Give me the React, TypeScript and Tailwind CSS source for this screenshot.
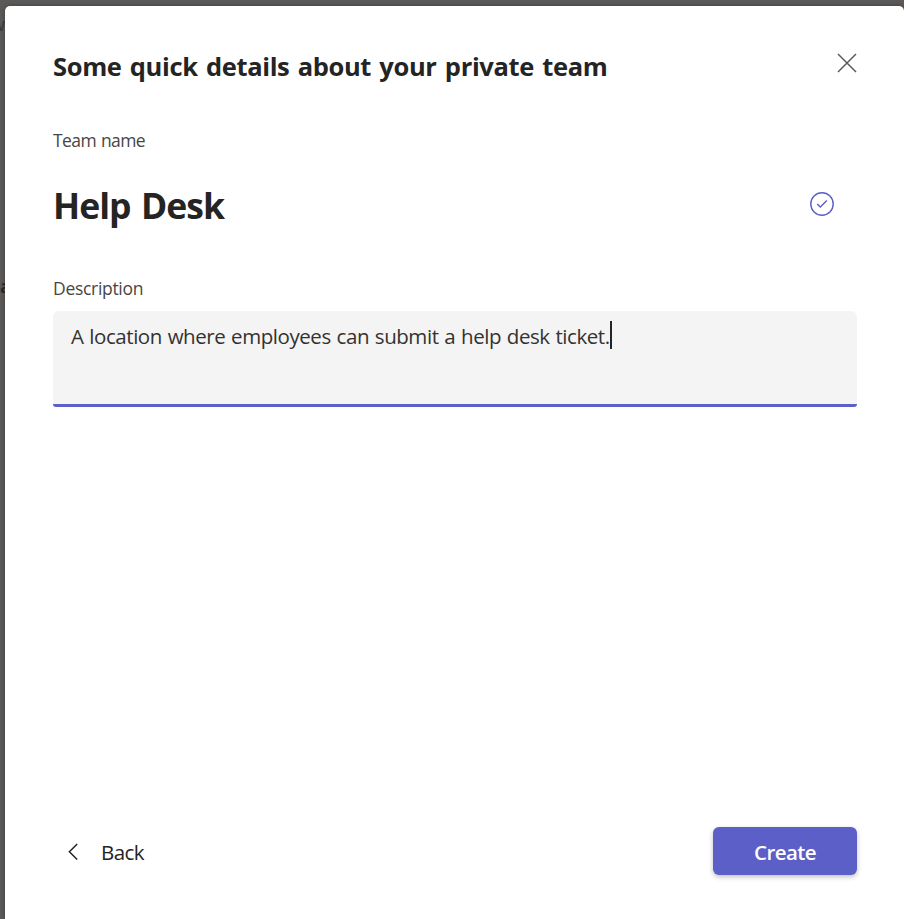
function CloseIcon() {
  return (
    <svg width="20" height="20" viewBox="0 0 20 20" fill="none" stroke="#5c5a58" strokeWidth="1.5">
      <path d="M1 1l18 18M19 1L1 19" />
    </svg>
  );
}

function CheckCircleIcon() {
  return (
    <svg width="24" height="24" viewBox="0 0 24 24" fill="none" stroke="#5b5fc7" strokeWidth="1.4">
      <circle cx="12" cy="12" r="11.2" />
      <path d="M7.2 12l3.1 3.1 6.5-6.5" />
    </svg>
  );
}

function ChevronLeftIcon() {
  return (
    <svg width="10" height="17" viewBox="0 0 10 17" fill="none" stroke="#242424" strokeWidth="1.5">
      <path d="M9.2 1L1.4 8.8l7.8 7.7" />
    </svg>
  );
}

export default function App() {
  return (
    <div className="relative h-[919px] w-[904px] overflow-hidden bg-[#5b5a58] pl-[5px] pt-[6px] font-['Open_Sans','Noto_Sans',sans-serif] text-[#242424]">
      <span className="absolute left-[-9px] top-[12px] text-[18px] leading-[24px] text-[#3b3a39]">w</span>
      <span className="absolute left-0 top-[274px] text-[18px] font-bold leading-[24px] text-[#2b2a29]">a</span>
      <main className="relative flex h-[913px] w-[899px] flex-col rounded-t-[5px] bg-white pl-[48px] pr-[47px] shadow-[0_0_4px_rgba(0,0,0,0.35)]">
        <header className="flex items-start justify-between pt-[42px]">
          <h1 className="h-[36px] whitespace-nowrap text-[25.5px] font-bold leading-[37px] tracking-[-0.35px] [word-spacing:2px]">
            Some quick details about your private team
          </h1>
          <button aria-label="Close" className="mt-[5px]">
            <CloseIcon />
          </button>
        </header>

        <label className="mt-[44px] h-[24px] text-[17.5px] leading-[24px] tracking-[-0.6px] text-[#484644] [word-spacing:1px]">Team name</label>
        <div className="mt-[27px] flex h-[50px] items-center justify-between pr-[23px]">
          <span className="pt-[2px] text-[35.5px] font-bold leading-[50px] tracking-[-0.95px] [word-spacing:2px]">Help Desk</span>
          <CheckCircleIcon />
        </div>

        <label className="mt-[47px] h-[24px] text-[17.5px] leading-[24px] tracking-[-0.3px] text-[#484644]">Description</label>
        <div className="mt-[11px] flex h-[96px] items-start rounded-b-[3px] rounded-t-[6px] bg-linear-to-t from-[#5b5fc7] from-[3px] to-[#f4f4f4] to-[3px] pl-[18px] pt-[10px]">
          <span className="whitespace-nowrap text-[20.5px] leading-[30px] tracking-[-0.44px] text-[#333231] [word-spacing:0.9px]">
            A location where employees can submit a help desk ticket.
          </span>
          <span className="h-[28px] w-[2px] bg-[#242424]" />
        </div>

        <footer className="mb-[44px] mt-auto flex h-[48px] items-center justify-between">
          <button className="flex items-center gap-[23px] pl-[15px]">
            <ChevronLeftIcon />
            <span className="pt-[2px] text-[20.5px] leading-[30px] tracking-[-0.6px]">Back</span>
          </button>
          <button className="h-[48px] w-[144px] rounded-[6px] bg-[#5b5fc7] pt-[2px] text-[20.5px] font-semibold leading-[30px] tracking-[-0.6px] text-white shadow-[0_2px_5px_rgba(0,0,0,0.25)]">
            Create
          </button>
        </footer>
      </main>
    </div>
  );
}
